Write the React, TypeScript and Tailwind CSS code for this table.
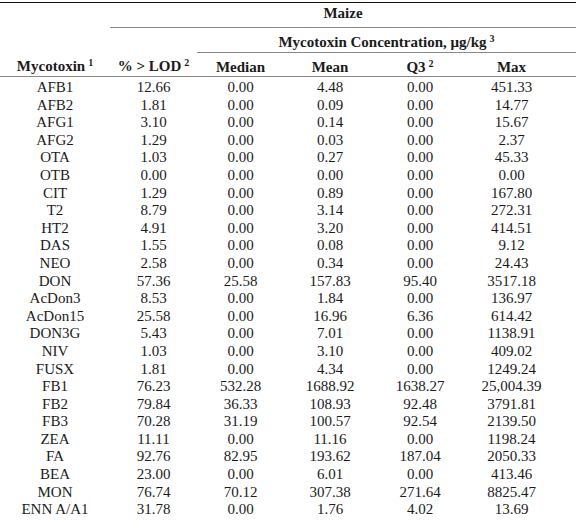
const rows: string[][] = [
  ["AFB1", "12.66", "0.00", "4.48", "0.00", "451.33"],
  ["AFB2", "1.81", "0.00", "0.09", "0.00", "14.77"],
  ["AFG1", "3.10", "0.00", "0.14", "0.00", "15.67"],
  ["AFG2", "1.29", "0.00", "0.03", "0.00", "2.37"],
  ["OTA", "1.03", "0.00", "0.27", "0.00", "45.33"],
  ["OTB", "0.00", "0.00", "0.00", "0.00", "0.00"],
  ["CIT", "1.29", "0.00", "0.89", "0.00", "167.80"],
  ["T2", "8.79", "0.00", "3.14", "0.00", "272.31"],
  ["HT2", "4.91", "0.00", "3.20", "0.00", "414.51"],
  ["DAS", "1.55", "0.00", "0.08", "0.00", "9.12"],
  ["NEO", "2.58", "0.00", "0.34", "0.00", "24.43"],
  ["DON", "57.36", "25.58", "157.83", "95.40", "3517.18"],
  ["AcDon3", "8.53", "0.00", "1.84", "0.00", "136.97"],
  ["AcDon15", "25.58", "0.00", "16.96", "6.36", "614.42"],
  ["DON3G", "5.43", "0.00", "7.01", "0.00", "1138.91"],
  ["NIV", "1.03", "0.00", "3.10", "0.00", "409.02"],
  ["FUSX", "1.81", "0.00", "4.34", "0.00", "1249.24"],
  ["FB1", "76.23", "532.28", "1688.92", "1638.27", "25,004.39"],
  ["FB2", "79.84", "36.33", "108.93", "92.48", "3791.81"],
  ["FB3", "70.28", "31.19", "100.57", "92.54", "2139.50"],
  ["ZEA", "11.11", "0.00", "11.16", "0.00", "1198.24"],
  ["FA", "92.76", "82.95", "193.62", "187.04", "2050.33"],
  ["BEA", "23.00", "0.00", "6.01", "0.00", "413.46"],
  ["MON", "76.74", "70.12", "307.38", "271.64", "8825.47"],
  ["ENN A/A1", "31.78", "0.00", "1.76", "4.02", "13.69"],
];

const Sup = ({ n }: { n: string }) => <sup className="text-[10px] ml-[3px]">{n}</sup>;

const head = "h-[24px] p-0 pt-[4px] leading-[16px]";

export default function App() {
  return (
    <div className="w-[576px] h-[520px] bg-white overflow-hidden pt-[2px] font-['Liberation_Serif','Times_New_Roman',serif] text-[15px] text-[#1b1b1b]">
      <table className="w-full border-collapse table-fixed text-center">
        <colgroup>
          <col className="w-[110px]" />
          <col className="w-[87px]" />
          <col className="w-[87px]" />
          <col className="w-[92px]" />
          <col className="w-[88px]" />
          <col className="w-[112px]" />
        </colgroup>
        <thead className="font-bold">
          <tr className="border-t-[1.5px] border-[#111]">
            <th className="h-[25px] p-0" />
            <th colSpan={5} className="h-[25px] p-0 pb-[4px] leading-[16px] border-b border-[#8a8a8a]">
              Maize
            </th>
          </tr>
          <tr>
            <th className="h-[25px] p-0" />
            <th className="h-[25px] p-0" />
            <th colSpan={4} className="h-[25px] p-0 pt-[4px] leading-[16px] border-b border-[#8a8a8a]">
              Mycotoxin Concentration, μg/kg<Sup n="3" />
            </th>
          </tr>
          <tr className="border-b border-[#8a8a8a]">
            <th className={head}>Mycotoxin<Sup n="1" /></th>
            <th className={head}>% &gt; LOD<Sup n="2" /></th>
            <th className={head}>Median</th>
            <th className={head}>Mean</th>
            <th className={head}>Q3<Sup n="2" /></th>
            <th className={`${head} pr-[17px]`}>Max</th>
          </tr>
        </thead>
        <tbody>
          {rows.map((r, i) => (
            <tr key={i}>
              {r.map((c, j) => (
                <td
                  key={j}
                  className={`h-[17.6px] p-0 pt-[4px] leading-[13.6px] whitespace-nowrap ${j === 5 ? "pr-[17px]" : ""}`}
                >
                  {c}
                </td>
              ))}
            </tr>
          ))}
        </tbody>
      </table>
    </div>
  );
}
